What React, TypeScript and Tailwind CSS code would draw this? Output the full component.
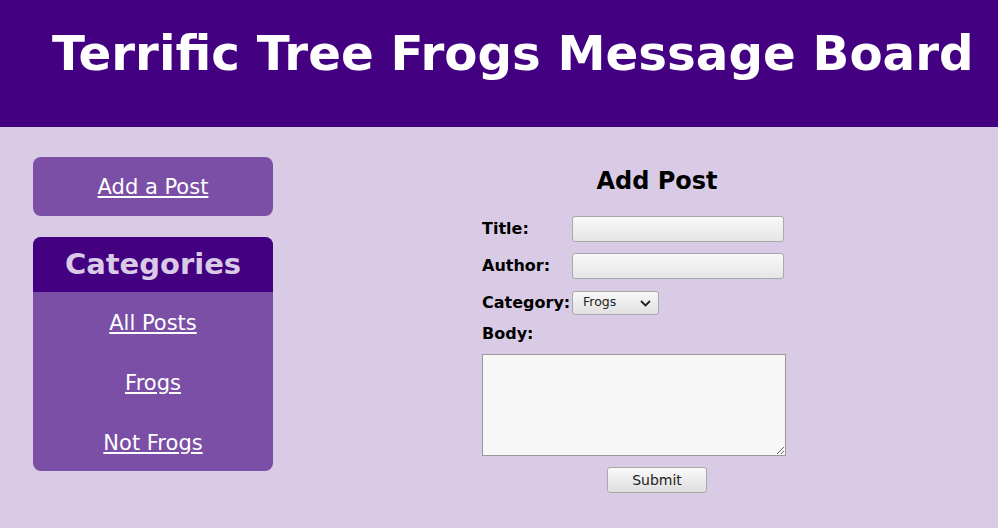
import React from "react";

export default function App() {
  const font = { fontFamily: '"DejaVu Sans", sans-serif' };
  return (
    <div className="min-h-[528px] w-full bg-[#d9cbe5] text-black" style={font}>
      <header className="h-[127px] bg-[#430080] pt-[21px] pl-[52px]">
        <h1 className="text-[48.3px] font-bold leading-[64px] text-white whitespace-nowrap">
          Terrific Tree Frogs Message Board
        </h1>
      </header>
      <div className="flex">
        <aside className="ml-[33px] mt-[30px] w-[240px] flex flex-col gap-[21px]">
          <div className="h-[59px] rounded-[8px] bg-[#7a4fa5] flex items-center justify-center pt-[2px]">
            <a href="#" className="text-[21px] text-white underline">Add a Post</a>
          </div>
          <div className="h-[234px] rounded-[8px] bg-[#7a4fa5] overflow-hidden">
            <div className="h-[55px] bg-[#430080] flex items-center justify-center pt-[1px]">
              <h2 className="text-[29px] font-bold text-[#d9cbe5]">Categories</h2>
            </div>
            <ul className="flex flex-col items-center pt-[2px]">
              {["All Posts", "Frogs", "Not Frogs"].map((t) => (
                <li key={t} className="h-[60px] flex items-center">
                  <a href="#" className="text-[21px] text-white underline">{t}</a>
                </li>
              ))}
            </ul>
          </div>
        </aside>
        <main className="flex-1 pl-[43px] flex justify-center">
          <form className="w-[350px]" onSubmit={(e) => e.preventDefault()}>
            <h2 className="text-center text-[24px] font-bold leading-[30px] mt-[39px] mb-[14px]">Add Post</h2>
            <div className="flex flex-col">
              <div className="flex items-center h-[37px]">
                <label className="w-[90px] text-[16px] font-bold">Title:</label>
                <input className="w-[212px] h-[26px] rounded-[3px] border border-[#a9a9a9] bg-gradient-to-b from-[#f8f8f8] to-[#e6e6e6]" />
              </div>
              <div className="flex items-center h-[37px]">
                <label className="w-[90px] text-[16px] font-bold">Author:</label>
                <input className="w-[212px] h-[26px] rounded-[3px] border border-[#a9a9a9] bg-gradient-to-b from-[#f8f8f8] to-[#e6e6e6]" />
              </div>
              <div className="flex items-center h-[37px]">
                <label className="w-[90px] text-[16px] font-bold whitespace-nowrap">Category:</label>
                <div className="relative w-[87px] h-[24px] rounded-[3px] border border-[#a9a9a9] bg-gradient-to-b from-[#f8f8f8] to-[#e0e0e0] flex items-center pl-[10px] text-[12.5px] text-[#222]">
                  <span>Frogs</span>
                  <svg className="absolute right-[7px] top-[8px]" width="11" height="7" viewBox="0 0 11 7">
                    <path d="M1 1 L5.5 5.5 L10 1" stroke="#222" strokeWidth="1.8" fill="none" />
                  </svg>
                </div>
              </div>
              <div className="h-[25px] flex items-center">
                <label className="text-[16px] font-bold">Body:</label>
              </div>
              <textarea className="mt-[8px] w-[304px] h-[102px] border border-[#999] bg-[#f7f7f7] resize" />
              <div className="w-[350px] flex justify-center mt-[11px]">
                <button type="submit" className="w-[100px] h-[26px] rounded-[3px] border border-[#a9a9a9] bg-gradient-to-b from-[#fafafa] to-[#dedede] text-[14px] text-[#222]">
                  Submit
                </button>
              </div>
            </div>
          </form>
        </main>
      </div>
    </div>
  );
}
